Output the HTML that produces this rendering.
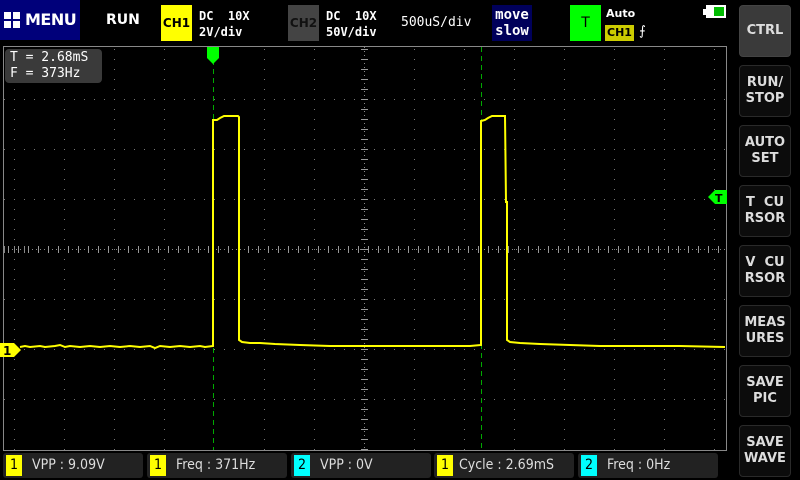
<!DOCTYPE html>
<html><head><meta charset="utf-8"><style>
body{margin:0;width:800px;height:480px;background:#000;overflow:hidden;position:relative;font-family:"DejaVu Sans Mono","Liberation Mono",monospace;color:#fff}
.a{position:absolute}
.btn{position:absolute;left:739px;width:50px;height:50px;border:1px solid #2a2a2a;border-radius:4px;background:#0c0c0c;color:#ddd;font:bold 13px "DejaVu Sans",sans-serif;display:flex;align-items:center;justify-content:center;text-align:center;line-height:16px}
.m{position:absolute;top:453px;height:25px;background:#222;border-radius:3px;font:14px "DejaVu Sans Condensed","DejaVu Sans",sans-serif;color:#ddd;line-height:25px}
.m b{display:inline-block;width:16px;height:21px;margin:2px 6px 0 3px;text-align:center;line-height:21px;color:#000;font-weight:normal;vertical-align:top}
.y{background:#ff0}.c{background:#0ff}
</style></head><body>
<div class="a" style="left:0;top:0;width:80px;height:40px;background:#00007a"></div>
<svg class="a" style="left:4px;top:12px" width="17" height="16"><rect x="0" y="0" width="7" height="7" fill="#fff"/><rect x="9" y="0" width="7" height="7" fill="#fff"/><rect x="0" y="9" width="7" height="7" fill="#fff"/><rect x="9" y="9" width="7" height="7" fill="#fff"/></svg>
<div class="a" style="left:25px;top:10px;font:bold 16px 'DejaVu Sans',sans-serif;letter-spacing:-0.5px">MENU</div>
<div class="a" style="left:106px;top:12px;font:bold 14px 'DejaVu Sans',sans-serif">RUN</div>
<div class="a" style="left:161px;top:5px;width:31px;height:36px;background:#ff0;color:#000;font:bold 12px 'DejaVu Sans',sans-serif;line-height:36px;text-align:center">CH1</div>
<div class="a" style="left:199px;top:8px;font-size:12px;line-height:16px;font-weight:bold">DC&nbsp;&nbsp;10X<br>2V/div</div>
<div class="a" style="left:288px;top:5px;width:31px;height:36px;background:#444;color:#111;font:bold 12px 'DejaVu Sans',sans-serif;line-height:36px;text-align:center">CH2</div>
<div class="a" style="left:326px;top:8px;font-size:12px;line-height:16px;font-weight:bold">DC&nbsp;&nbsp;10X<br>50V/div</div>
<div class="a" style="left:401px;top:15px;font-size:13px">500uS/div</div>
<div class="a" style="left:492px;top:5px;width:40px;height:36px;background:#00005a;font:bold 14px 'DejaVu Sans Mono',monospace;line-height:16px;text-align:center;padding-top:2px;box-sizing:border-box">move<br>slow</div>
<div class="a" style="left:570px;top:5px;width:31px;height:36px;background:#0f0;color:#000;font:14px 'DejaVu Sans',sans-serif;line-height:36px;text-align:center">T</div>
<div class="a" style="left:606px;top:7px;font:bold 11px 'DejaVu Sans',sans-serif">Auto</div>
<div class="a" style="left:605px;top:25px;width:29px;height:16px;background:#cc0;color:#000;font:bold 11px 'DejaVu Sans',sans-serif;line-height:16px;text-align:center">CH1</div>
<div class="a" style="left:639px;top:24px;font-size:13px">⨍</div>
<div class="a" style="left:703px;top:9px;width:4px;height:6px;background:#fff"></div>
<div class="a" style="left:706px;top:5px;width:20px;height:13px;background:#fff"></div>
<div class="a" style="left:714px;top:7px;width:10px;height:9px;background:#0b0"></div>
<svg class="a" style="left:0;top:0" width="730" height="452">
<g fill="none" stroke="#777" stroke-width="1" stroke-dasharray="1 9">
<path d="M14.5 49V450M64.5 49V450M114.5 49V450M164.5 49V450M264.5 49V450M314.5 49V450M414.5 49V450M464.5 49V450M514.5 49V450M564.5 49V450M614.5 49V450M664.5 49V450M714.5 49V450"/>
<path d="M4 99.5H726M4 149.5H726M4 199.5H726M4 299.5H726M4 349.5H726M4 399.5H726"/>
</g>
<g stroke="#888"><path d="M4 249.5H726M364.5 47V450" stroke-dasharray="1 3"/></g>
<g stroke="#888"><path d="M4.5 246V253M14.5 246V253M24.5 246V253" /></g>
<path d="M4 249.5H726" stroke="#999" stroke-dasharray="1 9" stroke-width="7" stroke-dashoffset="-4"/>
<path d="M364.5 47V450" stroke="#999" stroke-dasharray="1 9" stroke-width="7" stroke-dashoffset="-2"/>
<rect x="3.5" y="46.5" width="723" height="404" fill="none" stroke="#888"/>
<path d="M213.5 60V450M481.5 47V450" stroke="#0a0" stroke-dasharray="5 4"/>
<polygon points="207,47 219,47 219,58 213,64 207,58" fill="#0f0"/>
<polyline fill="none" stroke="#ff0" stroke-width="2" points="20,347 25,346 30,347 40,346 45,347 55,346 60,345 65,347 70,346 80,347 90,346 100,347 110,346 120,347 130,346 140,347 150,346 155,348 160,346 170,347 180,346 190,347 200,346 205,347 213,346 213,120 217,120 220,118 224,116 238,116 239,117 239,340 242,342 250,343 260,343 275,344 300,345 330,346 360,346 400,346 440,346 470,346 481,345 481,121 485,120 488,118 492,116 505,116 506,202 507,202 507,340 510,342 520,343 540,344 570,345 600,346 640,346 680,346 725,347"/>
<polygon points="0,343 14,343 21,350 14,357 0,357" fill="#ff0"/>
<text x="3" y="355" font-family="DejaVu Sans" font-weight="bold" font-size="12" fill="#000">1</text>
<polygon points="727,190 715,190 708,197 715,204 727,204" fill="#0f0"/>
<text x="715" y="202" font-family="DejaVu Sans" font-weight="bold" font-size="11" fill="#000">T</text>
</svg>
<div class="a" style="left:5px;top:49px;width:97px;height:34px;background:#3a3a3a;border-radius:4px;font-size:13px;line-height:16px;padding:1px 0 0 5px;box-sizing:border-box">T = 2.68mS<br>F = 373Hz</div>
<div class="btn" style="top:5px;background:#3a3a3a;border-color:#444">CTRL</div>
<div class="btn" style="top:65px">RUN/<br>STOP</div>
<div class="btn" style="top:125px">AUTO<br>SET</div>
<div class="btn" style="top:185px">T&nbsp;&nbsp;CU<br>RSOR</div>
<div class="btn" style="top:245px">V&nbsp;&nbsp;CU<br>RSOR</div>
<div class="btn" style="top:305px">MEAS<br>URES</div>
<div class="btn" style="top:365px">SAVE<br>PIC</div>
<div class="btn" style="top:425px">SAVE<br>WAVE</div>
<div class="m" style="left:3px;width:140px"><b class="y">1</b> VPP : 9.09V</div>
<div class="m" style="left:147px;width:140px"><b class="y">1</b> Freq : 371Hz</div>
<div class="m" style="left:291px;width:140px"><b class="c">2</b> VPP : 0V</div>
<div class="m" style="left:434px;width:140px"><b class="y">1</b>Cycle : 2.69mS</div>
<div class="m" style="left:578px;width:140px"><b class="c">2</b> Freq : 0Hz</div>
</body></html>
